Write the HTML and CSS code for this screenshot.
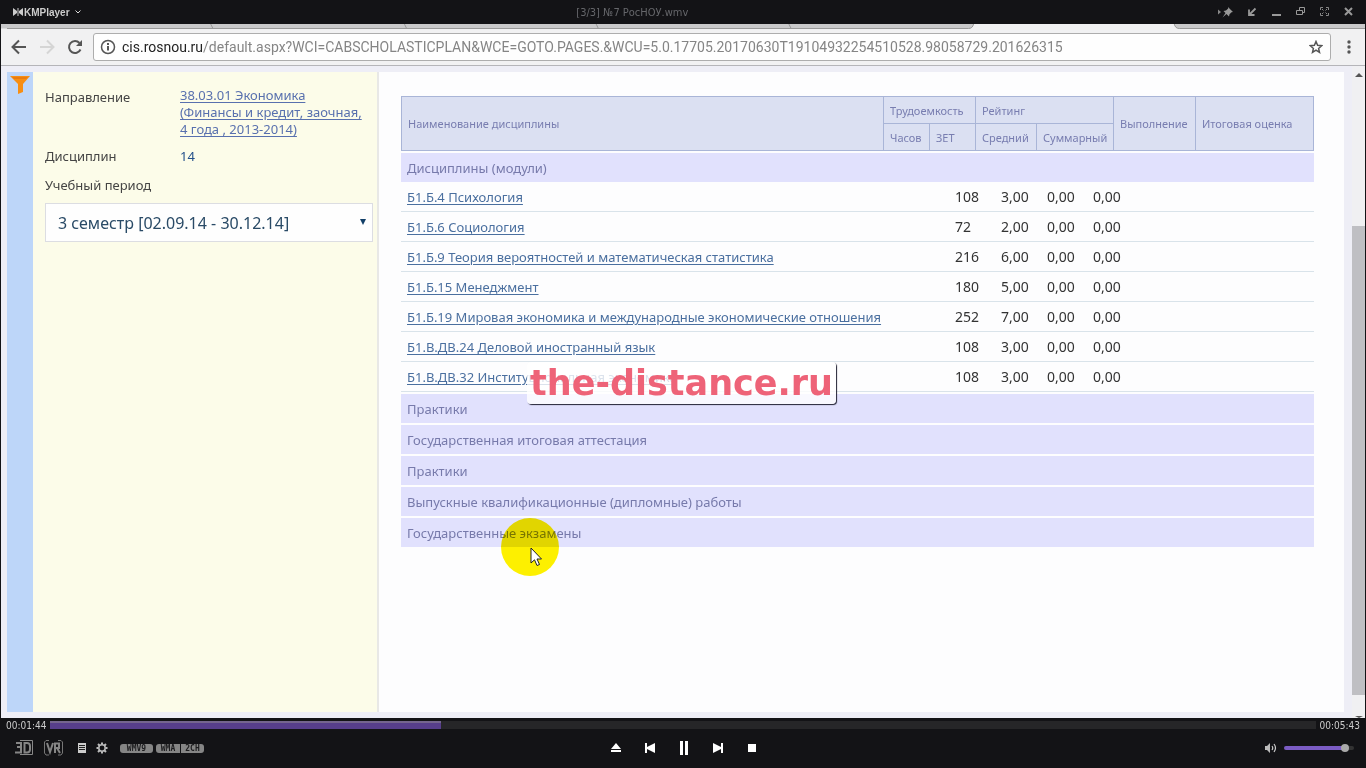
FILE: index.html
```
<!DOCTYPE html>
<html lang="ru">
<head>
<meta charset="utf-8">
<title>KMPlayer</title>
<link rel="stylesheet" href="styles.css">
</head>
<body>
<div class="player">
  <header class="titlebar">
    <button class="brand" type="button">
      <svg width="10" height="8" viewBox="0 0 10 8" aria-hidden="true"><path d="M0 0l4 3V0h2v3l4-3v8L6 5v3H4V5L0 8z" fill="#ccc"/><path d="M5 0v8" stroke="#131316"/></svg>
      <span>KMPlayer</span>
      <svg class="caret" width="6" height="4" viewBox="0 0 6 4" aria-hidden="true"><path d="M.5.500L3 3 5.500.500" fill="none" stroke="#ddd"/></svg>
    </button>
    <span class="file">[3/3] №7 РосНОУ.wmv</span>
    <div class="winbtns">
      <button type="button" aria-label="Поверх окон"><svg width="18" height="12" viewBox="0 0 18 12"><path d="M2 3.500l3 2.500-3 2.500z" fill="#888"/><path d="M12 1l5 5-1.500.300-2 2L13 10.500 10.500 8 6.500 11.500 9.500 7 7.500 5l2.500-.5 2.200-2z" fill="#999"/></svg></button>
      <button type="button" aria-label="Мини"><svg width="10" height="10" viewBox="0 0 10 10"><path d="M7.500 1.500L1.500 7.500M1 2.500V8h5.500" fill="none" stroke="#999" stroke-width="1.800"/></svg></button>
      <button type="button" aria-label="Свернуть"><svg width="10" height="10" viewBox="0 0 10 10"><path d="M0 8h9" stroke="#999" stroke-width="2"/></svg></button>
      <button type="button" aria-label="Окно"><svg width="10" height="10" viewBox="0 0 10 10"><path d="M3.500 3V.500h5v5H7M.500 3.500h6v4h-6z" fill="none" stroke="#999"/></svg></button>
      <button type="button" aria-label="Во весь экран"><svg width="10" height="10" viewBox="0 0 10 10"><path d="M.500 3V.500H3M6 .500h2.500V3M8.500 6v2.500H6M3 8.500H.500V6M2 2l1.500 1.500M7 2L5.500 3.500M7 7L5.500 5.500M2 7l1.500-1.500" fill="none" stroke="#888"/></svg></button>
      <button type="button" aria-label="Закрыть"><svg width="10" height="10" viewBox="0 0 10 10"><path d="M1 1l7 7M8 1L1 8" stroke="#999" stroke-width="2"/></svg></button>
    </div>
  </header>

  <main class="video">
    <svg class="tabs" viewBox="0 0 1366 5" preserveAspectRatio="none" aria-hidden="true"><path d="M0 0H974Q973 4.500 969 4.500H0zM1175 0Q1176 4.500 1180 4.500H1366V0z" fill="#c9c9ca"/><path d="M6 4.500H969Q973 4.500 974 0M1175 0Q1176 4.500 1180 4.500H1366M210 0l2 4M404 0l2 4M596 0l2 4M789 0l2 4" fill="none" stroke="#999"/></svg>
    <div class="toolbar">
      <button class="nav" type="button" aria-label="Назад"><svg width="16" height="16" viewBox="0 0 16 16"><path d="M15 8H2M8 1.500L1.500 8 8 14.500" fill="none" stroke="#555" stroke-width="2"/></svg></button>
      <button class="nav" type="button" aria-label="Вперёд"><svg width="16" height="16" viewBox="0 0 16 16"><path d="M1 8h13M8 1.500L14.500 8 8 14.500" fill="none" stroke="#d5d5d5" stroke-width="2"/></svg></button>
      <button class="nav" type="button" aria-label="Обновить"><svg width="16" height="16" viewBox="0 0 16 16"><path d="M13.500 10.500A6 6 0 1 1 12.500 4" fill="none" stroke="#555" stroke-width="2"/><path d="M15 1v6H9z" fill="#555"/></svg></button>
      <div class="omnibox">
        <svg width="16" height="16" viewBox="0 0 16 16" aria-hidden="true"><circle cx="8" cy="8" r="6.500" fill="none" stroke="#555" stroke-width="1.500"/><path d="M8 7v4.500M8 4v2" stroke="#555" stroke-width="2"/></svg>
        <div class="url"><span class="host">cis.rosnou.ru</span>/default.aspx?WCI=CABSCHOLASTICPLAN&amp;WCE=GOTO.PAGES.&amp;WCU=5.0.17705.20170630T19104932254510528.98058729.201626315</div>
        <button type="button" aria-label="В закладки"><svg width="14" height="14" viewBox="0 0 14 14"><path d="M7 1.500l1.600 3.800 4.100.400-3.100 2.700.9 4L7 10.200l-3.500 2.200.9-4L1.300 5.700l4.100-.4z" fill="none" stroke="#555" stroke-width="1.500"/></svg></button>
      </div>
      <button type="button" aria-label="Меню"><svg width="4" height="14" viewBox="0 0 4 14"><circle cx="2" cy="2" r="1.700" fill="#555"/><circle cx="2" cy="7" r="1.700" fill="#555"/><circle cx="2" cy="12" r="1.700" fill="#555"/></svg></button>
    </div>

    <div class="page">
      <div class="rail"><svg width="20" height="18" viewBox="0 0 20 18" aria-hidden="true"><path d="M0 0h20l-7 8v8l-5 2V8z" fill="#f78e12"/><path d="M2 1h16l-2 2H4z" fill="#e97c10"/></svg></div>
      <aside class="side">
        <dl class="facts">
          <dt>Направление</dt>
          <dd><a href="#">38.03.01 Экономика (Финансы и кредит, заочная, 4 года , 2013-2014)</a></dd>
          <dt>Дисциплин</dt>
          <dd class="count">14</dd>
        </dl>
        <label for="period">Учебный период</label>
        <div class="period">
          <select id="period"><option>3 семестр [02.09.14 - 30.12.14]</option></select>
        </div>
      </aside>
      <section class="content">
        <table class="head">
          <colgroup><col><col class="c46"><col class="c46"><col class="c61"><col class="c77"><col class="c82"><col class="c118"></colgroup>
          <thead>
            <tr><th rowspan="2">Наименование дисциплины</th><th colspan="2">Трудоемкость</th><th colspan="2">Рейтинг</th><th rowspan="2">Выполнение</th><th rowspan="2">Итоговая оценка</th></tr>
            <tr><th>Часов</th><th>ЗЕТ</th><th>Средний</th><th>Суммарный</th></tr>
          </thead>
        </table>
        <h2 class="group">Дисциплины (модули)</h2>
        <table class="rows">
          <colgroup><col><col class="c46"><col class="c46"><col class="c46"><col class="c46"><col class="c181"></colgroup>
          <tbody>
            <tr><td><a href="#">Б1.Б.4 Психология</a></td><td>108</td><td>3,00</td><td>0,00</td><td>0,00</td><td></td></tr>
            <tr><td><a href="#">Б1.Б.6 Социология</a></td><td>72</td><td>2,00</td><td>0,00</td><td>0,00</td><td></td></tr>
            <tr><td><a href="#">Б1.Б.9 Теория вероятностей и математическая статистика</a></td><td>216</td><td>6,00</td><td>0,00</td><td>0,00</td><td></td></tr>
            <tr><td><a href="#">Б1.Б.15 Менеджмент</a></td><td>180</td><td>5,00</td><td>0,00</td><td>0,00</td><td></td></tr>
            <tr><td><a href="#">Б1.Б.19 Мировая экономика и международные экономические отношения</a></td><td>252</td><td>7,00</td><td>0,00</td><td>0,00</td><td></td></tr>
            <tr><td><a href="#">Б1.В.ДВ.24 Деловой иностранный язык</a></td><td>108</td><td>3,00</td><td>0,00</td><td>0,00</td><td></td></tr>
            <tr><td><a href="#">Б1.В.ДВ.32 Институциональная экономика</a></td><td>108</td><td>3,00</td><td>0,00</td><td>0,00</td><td></td></tr>
          </tbody>
        </table>
        <h2 class="group">Практики</h2>
        <h2 class="group">Государственная итоговая аттестация</h2>
        <h2 class="group">Практики</h2>
        <h2 class="group">Выпускные квалификационные (дипломные) работы</h2>
        <h2 class="group">Государственные экзамены</h2>
      </section>
      <div class="scroll" aria-hidden="true"><span class="up"></span><span class="thumb"></span><span class="down"></span></div>
    </div>
    <div class="watermark">the-distance.ru</div>
    <div class="spot"></div>
    <svg class="cursor" width="13" height="20" viewBox="0 0 13 20" aria-hidden="true"><path d="M1 1v15l3.500-3.200L7 18.500l2.500-1L7 12h4.500z" fill="#fff" stroke="#222"/></svg>
  </main>

  <footer class="controls">
    <div class="seek">
      <span class="time">00:01:44</span>
      <progress class="track" max="343" value="106" aria-label="Позиция"></progress>
      <span class="time">00:05:43</span>
    </div>
    <div class="bar">
      <div class="left">
        <button type="button" class="mode" aria-label="3D"><svg width="20" height="18" viewBox="0 0 20 18"><path d="M6 1.500h12.500v14H6" fill="none" stroke="#888"/><path d="M2 4h5v4H3m4 0v5.500H1M10.500 4v9.500H13q3 0 3-3V7q0-3-3-3z" fill="none" stroke="#858585" stroke-width="2"/></svg></button>
        <button type="button" class="mode" aria-label="VR"><svg width="20" height="18" viewBox="0 0 20 18"><path d="M5 1.500H2L.500 3v11L2 16h3M14 1.500h3L18.500 3v11L17 16h-3" fill="none" stroke="#777"/><path d="M3 4l3 9 3-9M11 14V4.500h4V9h-4m2 0l3 5" fill="none" stroke="#858585" stroke-width="2"/></svg></button>
        <button type="button" class="list" aria-label="Список"><svg width="8" height="10" viewBox="0 0 8 10"><path d="M0 0h8v10H0z" fill="#ccc"/><path d="M1 2.500h6M1 4.500h6M1 6.500h6" stroke="#222"/></svg></button>
        <button type="button" class="gear" aria-label="Настройки"><svg width="12" height="12" viewBox="0 0 12 12"><circle cx="6" cy="6" r="3.200" fill="none" stroke="#bbb" stroke-width="1.500"/><path d="M6 .500v2M6 9.500v2M.500 6h2M9.500 6h2M2 2l1.500 1.500M8.500 8.500L10 10M10 2L8.500 3.500M3.500 8.500L2 10" stroke="#bbb" stroke-width="2"/></svg></button>
        <span class="codec wmv">WMV9</span><span class="codec wma">WMA</span><span class="codec ch">2CH</span>
      </div>
      <div class="center">
        <button type="button" aria-label="Открыть"><svg width="10" height="10" viewBox="0 0 10 10"><path d="M5 0l5 6H0zM0 7h10v2H0z" fill="#fff"/></svg></button>
        <button type="button" aria-label="Предыдущий"><svg width="10" height="10" viewBox="0 0 10 10"><path d="M0 0h2v4l8-4v10L2 6v4H0z" fill="#fff"/></svg></button>
        <button type="button" aria-label="Пауза"><svg width="8" height="14" viewBox="0 0 8 14"><path d="M0 0h3v14H0zM5 0h3v14H5z" fill="#fff"/></svg></button>
        <button type="button" aria-label="Следующий"><svg width="10" height="10" viewBox="0 0 10 10"><path d="M10 0H8v4L0 0v10l8-4v4h2z" fill="#fff"/></svg></button>
        <button type="button" aria-label="Стоп"><svg width="8" height="8" viewBox="0 0 8 8"><path d="M0 0h8v8H0z" fill="#fff"/></svg></button>
      </div>
      <div class="right">
        <button type="button" aria-label="Звук"><svg width="12" height="10" viewBox="0 0 12 10"><path d="M0 3h2l3-3v10L2 7H0z" fill="#bbb"/><path d="M7 3q1.500 2 0 4M9 1q3 4 0 8" fill="none" stroke="#ccc" stroke-width="1.200"/></svg></button>
        <input class="volume" type="range" min="0" max="100" value="92" aria-label="Громкость">
      </div>
    </div>
  </footer>
</div>
</body>
</html>
```
FILE: styles.css
```
* { box-sizing: border-box; }
body { margin: 0; font-family: "Noto Sans", "Open Sans", sans-serif; font-size: 13px; }
button { display: flex; align-items: center; justify-content: center; padding: 0; border: 0; background: none; font: inherit; }
svg { display: block; flex: none; }

.player { display: flex; flex-direction: column; height: 100vh; background: #131316; }

.titlebar { display: grid; grid-template-columns: 11fr auto 13fr; align-items: center; height: 24px; padding: 0 12px 0 13px; }
.brand { justify-self: start; gap: 1px; color: #ccc; font: bold 10px "Liberation Sans", sans-serif; }
.caret { margin-left: 4px; }
.file { color: #66676b; font: 11px "DejaVu Sans Condensed", sans-serif; }
.winbtns { display: flex; align-items: center; justify-content: flex-end; gap: 14px; }

.video { position: relative; display: flex; flex: 1; flex-direction: column; min-height: 0; margin: 0 1px; background: #eeeef6; }
.tabs { width: 100%; height: 5px; background: #f1f1f2; }
.toolbar { display: flex; flex: none; align-items: center; height: 37px; padding: 0 14px 0 4px; border-bottom: 1px solid #b5b5b9; background: #f1f1f2; }
.nav { width: 28px; }
.omnibox { display: flex; flex: 1; align-items: center; gap: 6px; min-width: 0; height: 28px; margin: 0 16px 0 4px; padding: 0 7px 0 6px; border: 1px solid #adadad; border-radius: 3px; background: #fefefe; }
.url { flex: 1; overflow: hidden; color: #858585; font-family: Roboto, sans-serif; font-size: 14px; white-space: nowrap; }
.host { color: #222; }

.page { display: flex; flex: 1; min-height: 0; padding: 6px 0 6px 6px; }
.rail { display: flex; flex: none; justify-content: center; width: 26px; padding-top: 4px; background: #bdd6f9; }
.side { flex: none; width: 346px; padding: 15px 4px 0 12px; border-right: 2px solid #e8e8e6; background: #fcfce9; color: #444; }
.facts { display: grid; grid-template-columns: 135px 1fr; row-gap: 8px; margin: 0 0 11px; line-height: 17px; }
.facts dt { padding-top: 2px; }
.facts dd { margin: 0; padding-right: 6px; }
.facts .count { padding-top: 2px; color: #24508a; }
.side label { display: block; line-height: 19px; }
a { color: #5870ae; text-underline-offset: 2px; }
.period { position: relative; margin-top: 8px; }
.period select { width: 100%; height: 39px; padding: 0 12px; border: 1px solid #dcdde2; border-radius: 0; background: #fefefe; color: #294a66; font: 16px "Noto Sans", sans-serif; appearance: none; }
.period::after { position: absolute; top: 16px; right: 7px; border: 3px solid transparent; border-top: 6px solid #123f68; border-bottom: 0; content: ""; }

.content { flex: 1; min-width: 0; padding: 24px 30px 0 22px; background: #fdfdfe; }
.content table { width: 100%; border-collapse: collapse; table-layout: fixed; }
.head { background: #dbe0f2; color: #787db0; font-size: 11px; }
.head th { height: 27px; padding: 0 6px; border: 1px solid #a9b5d7; font-weight: normal; text-align: left; white-space: nowrap; }
.c46 { width: 46px; }
.c61 { width: 61px; }
.c77 { width: 77px; }
.c82 { width: 82px; }
.c118 { width: 118px; }
.c181 { width: 181px; }
.group { height: 29px; margin: 2px 0 0; padding: 0 6px; background: #e1e1fd; color: #777aab; font-size: 13px; font-weight: normal; line-height: 30px; }
.content .rows { border-collapse: separate; border-spacing: 0; font-size: 14px; }
.rows td { height: 30px; padding: 0 6px; border-bottom: 1px solid #d9e3ea; color: #333; white-space: nowrap; }
.rows a { color: #4a6f9f; font-size: 13px; }

.scroll { display: flex; flex: none; flex-direction: column; width: 21px; margin: -6px 0; padding-left: 8px; background: linear-gradient(90deg, #eeeef6 8px, #f0f0f2 8px); }
.up, .down { height: 0; margin: 7px 3px 0; border: 4px solid transparent; border-top: 0; border-bottom-color: #555; }
.down { margin: auto 3px 0; border-top: 2px solid #555; border-bottom: 0; }
.thumb { flex: none; height: 72%; margin-top: 149px; background: #bfbfc3; }

.watermark { position: absolute; top: 338px; left: 526px; padding: 0 3px; border-radius: 4px; background: rgba(255, 255, 255, .8); box-shadow: 1px 1px 1px #223; color: #ee6378; font: bold 35px/42px "DejaVu Sans", sans-serif; }
.spot { position: absolute; top: 494px; left: 500px; width: 58px; height: 58px; border-radius: 50%; background: #fff200; mix-blend-mode: multiply; }
.cursor { position: absolute; top: 523px; left: 529px; }

.controls { flex: none; }
.seek { display: flex; align-items: center; gap: 4px; height: 14px; padding: 0 6px; }
.time { color: #ccc; font: 10px "DejaVu Sans Condensed", sans-serif; }
.track { flex: 1; height: 8px; border: 0; background: #262628; appearance: none; }
.track::-webkit-progress-bar { background: #262628; }
.track::-webkit-progress-value { background: linear-gradient(#75658f 2px, #573e8b 2px); }
.bar { display: grid; grid-template-columns: 1fr auto 1fr; align-items: center; height: 36px; padding: 0 12px 4px 14px; }
.left, .center, .right { display: flex; align-items: center; }
.mode { margin-right: 10px; }
.list { margin-left: 4px; }
.gear { margin: 0 12px 0 10px; }
.codec { height: 9px; border-radius: 3px; background: #858585; color: #1c1c1e; font: bold 8px/9px "DejaVu Sans Mono", monospace; text-align: center; }
.wmv { width: 33px; }
.wma { width: 24px; margin-left: 3px; border-radius: 3px 0 0 3px; }
.ch { width: 23px; margin-left: 1px; border-radius: 0 3px 3px 0; }
.center button { width: 34px; }
.right { justify-content: flex-end; gap: 7px; }
.volume { width: 70px; height: 10px; margin: 0; background: none; appearance: none; }
.volume::-webkit-slider-runnable-track { height: 4px; border-radius: 2px; background: linear-gradient(90deg, #7b5cc4 85%, #333 85%); }
.volume::-webkit-slider-thumb { width: 8px; height: 8px; margin-top: -2px; border-radius: 50%; background: #aaa; appearance: none; }
```
